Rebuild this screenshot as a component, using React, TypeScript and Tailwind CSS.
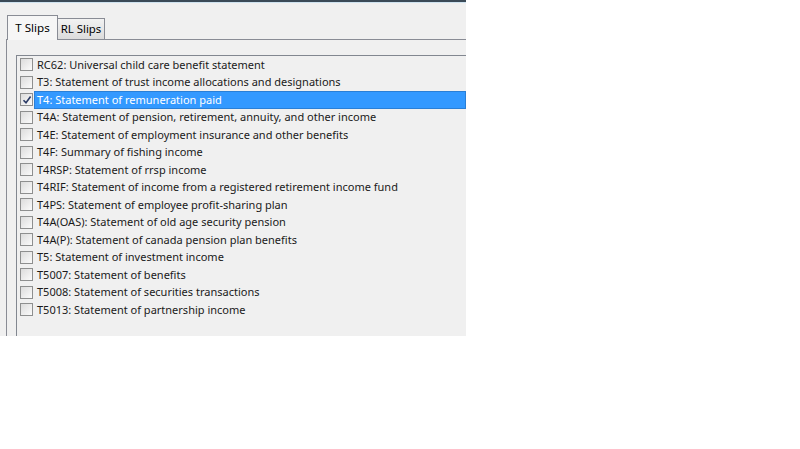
import React from "react";

const items: { label: string; checked?: boolean; selected?: boolean }[] = [
  { label: "RC62: Universal child care benefit statement" },
  { label: "T3: Statement of trust income allocations and designations" },
  { label: "T4: Statement of remuneration paid", checked: true, selected: true },
  { label: "T4A: Statement of pension, retirement, annuity, and other income" },
  { label: "T4E: Statement of employment insurance and other benefits" },
  { label: "T4F: Summary of fishing income" },
  { label: "T4RSP: Statement of rrsp income" },
  { label: "T4RIF: Statement of income from a registered retirement income fund" },
  { label: "T4PS: Statement of employee profit-sharing plan" },
  { label: "T4A(OAS): Statement of old age security pension" },
  { label: "T4A(P): Statement of canada pension plan benefits" },
  { label: "T5: Statement of investment income" },
  { label: "T5007: Statement of benefits" },
  { label: "T5008: Statement of securities transactions" },
  { label: "T5013: Statement of partnership income" },
];

function Check({ checked }: { checked?: boolean }) {
  return (
    <div className="w-[13px] h-[13px] border border-[#8e8f8f] bg-white flex items-center justify-center shrink-0">
      <div className="w-[11px] h-[11px] bg-gradient-to-br from-[#dcdcdc] to-[#fbfbfb] flex items-center justify-center">
        {checked && (
          <svg width="10" height="10" viewBox="0 0 10 10">
            <path d="M1.5 5.2 L4 7.8 L8.6 1.6" fill="none" stroke="#2a3a65" strokeWidth="1.6" />
          </svg>
        )}
      </div>
    </div>
  );
}

export default function App() {
  return (
    <div className="w-[800px] h-[449px] bg-white" style={{ fontFamily: '"Noto Sans", "Open Sans", sans-serif' }}>
      <div className="w-[466px] h-[336px] bg-[#f0f0f0] flex flex-col overflow-hidden">
        <div className="h-[2px] bg-[#3b4a57]" />
        <div className="h-[1px] bg-[#cfe3f0]" />
        <div className="flex items-end pl-[7px] mt-[11px] h-[25px]">
          <div className="h-[25px] w-[51px] border border-b-0 border-[#898c95] bg-[#f6f6f6] flex items-center justify-center text-[11.6px] text-black relative top-[1px] z-10 -mr-[1px]">
            T Slips
          </div>
          <div className="h-[21px] w-[48px] border border-b-0 border-[#898c95] bg-gradient-to-b from-[#f2f2f2] to-[#dcdcdc] flex items-center justify-center text-[11.4px] text-black">
            RL Slips
          </div>
        </div>
        <div className="flex-1 ml-[6px] border-l border-t border-[#898c95] bg-[#f0f0f0] flex flex-col">
          <div className="flex-1 ml-[9px] mt-[15px] border-l border-t border-[#828790] flex flex-col">
            {items.map((it) => (
              <div key={it.label} className="h-[17.5px] flex items-center pl-[3px]">
                <Check checked={it.checked} />
                <div
                  className={
                    it.selected
                      ? "ml-[1px] pl-[2px] flex-1 h-[17.5px] flex items-center bg-[#3399ff] border border-[#2a7fd6] text-white text-[11px] whitespace-nowrap"
                      : "ml-[1px] pl-[2px] flex-1 h-[17.5px] flex items-center border border-transparent text-[#1a1a1a] text-[11px] whitespace-nowrap"
                  }
                >
                  {it.label}
                </div>
              </div>
            ))}
          </div>
        </div>
      </div>
    </div>
  );
}
